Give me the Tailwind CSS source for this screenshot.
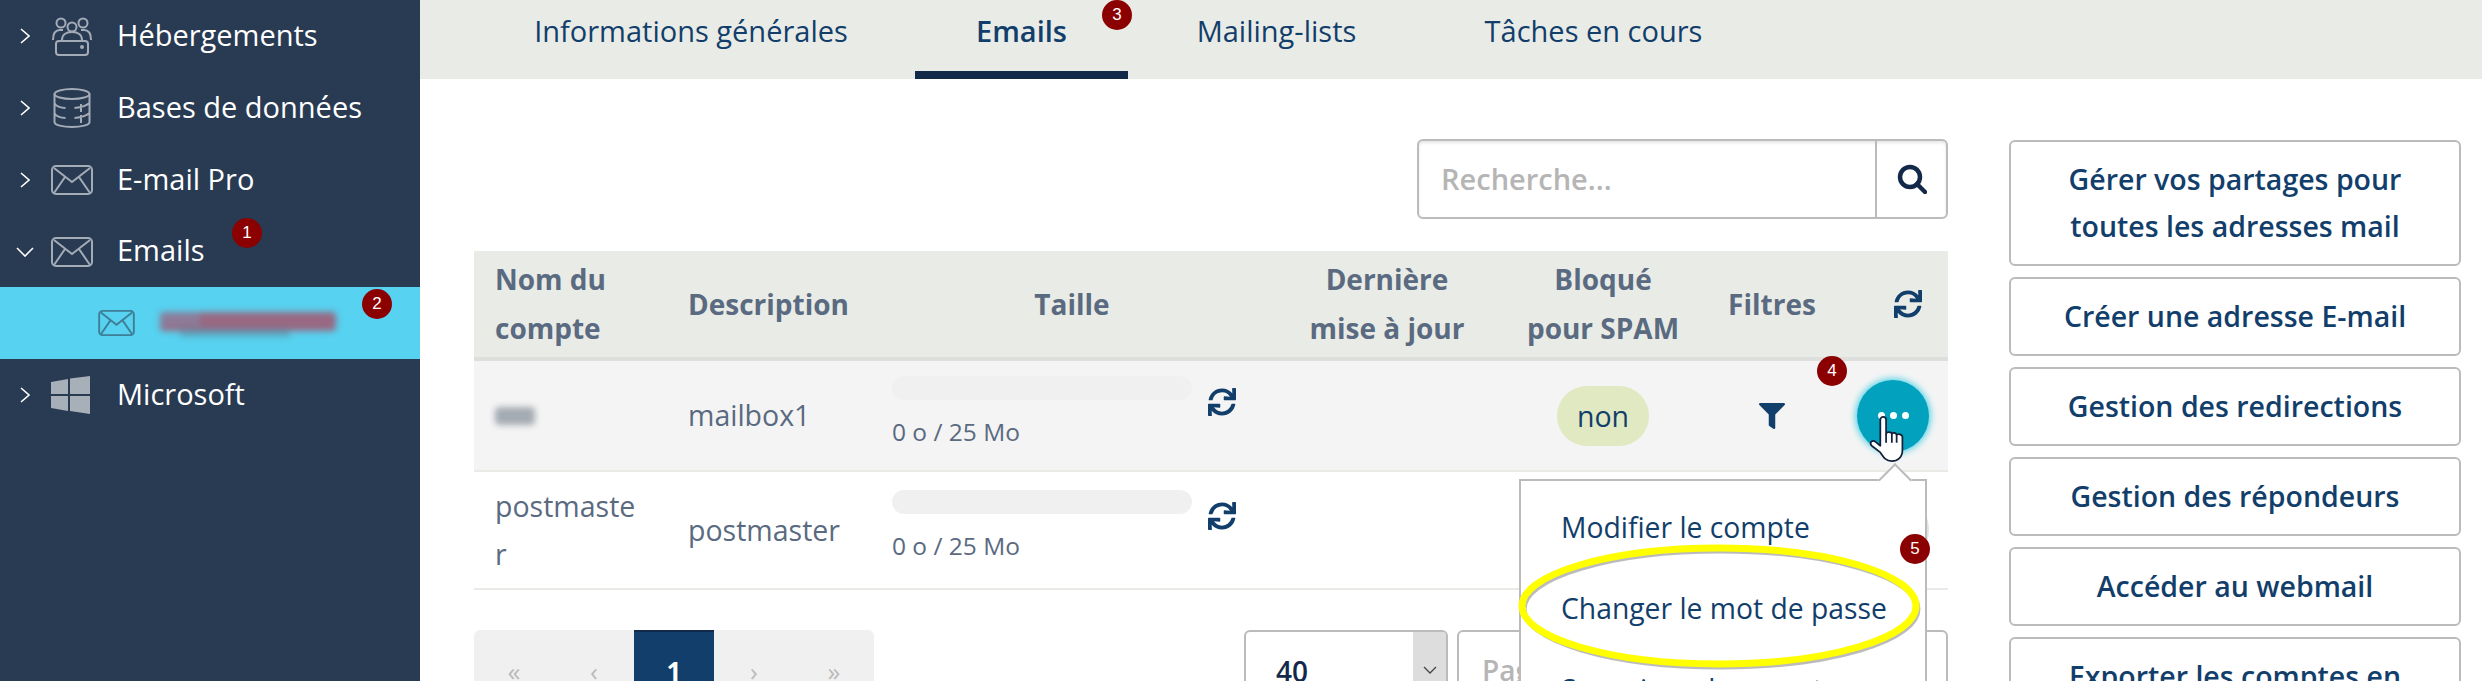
<!DOCTYPE html>
<html lang="fr">
<head>
    <meta charset="UTF-8">
    <title>Emails</title>
    <script src="https://cdn.jsdelivr.net/npm/@tailwindcss/browser@4"></script>
</head>
<body class="bg-white [font-family:'Open_Sans',sans-serif]">
<div class="relative flex h-[681px] w-[2482px] overflow-hidden">

    <!-- sidebar -->
    <aside class="w-[420px] shrink-0 bg-[#293a53] text-[29px] text-white">
        <div class="flex h-[72px] items-center">
            <svg class="ml-[20px] h-[16px] w-[10px]" viewBox="0 0 10 16" fill="none" stroke="#fff" stroke-width="1.6"><path d="M1 1l8 7-8 7"/></svg>
            <svg class="ml-[21px] h-[40px] w-[42px] text-[#a3abb7]" viewBox="0 0 42 40" fill="none" stroke="currentColor" stroke-width="2">
                <circle cx="10" cy="7" r="4.5"/><circle cx="21" cy="11" r="4.5"/><circle cx="32" cy="7" r="4.5"/>
                <path d="M2 24c0-7 3-10 7-10h3M40 24c0-7-3-10-7-10h-3M11 24c0-5 4-8 10-8s10 3 10 8"/>
                <rect x="5" y="25" width="32" height="14" rx="3"/><circle cx="31" cy="31" r="1" fill="currentColor"/>
            </svg>
            <span class="mb-[3px] ml-[24px]">Hébergements</span>
        </div>
        <div class="flex h-[72px] items-center">
            <svg class="ml-[20px] h-[16px] w-[10px]" viewBox="0 0 10 16" fill="none" stroke="#fff" stroke-width="1.6"><path d="M1 1l8 7-8 7"/></svg>
            <svg class="ml-[21px] h-[40px] w-[42px] text-[#a3abb7]" viewBox="0 0 42 40" fill="none" stroke="currentColor" stroke-width="2">
                <ellipse cx="21" cy="6" rx="17.5" ry="5"/>
                <path d="M3.5 6v28c0 3 8 5 17.5 5s17.500-2 17.500-5V6M3.5 15c1 3 6 5 11 5M3.5 25c1 3 6 5 11 5M38.500 15c-2 2-6 4-15 5M38.500 25c-2 2-6 4-15 5M30 16v8M30 27v8"/>
            </svg>
            <span class="mb-[3px] ml-[24px]">Bases de données</span>
        </div>
        <div class="flex h-[72px] items-center">
            <svg class="ml-[20px] h-[16px] w-[10px]" viewBox="0 0 10 16" fill="none" stroke="#fff" stroke-width="1.6"><path d="M1 1l8 7-8 7"/></svg>
            <svg class="ml-[21px] h-[30px] w-[42px] text-[#a3abb7]" viewBox="0 0 42 30" fill="none" stroke="currentColor" stroke-width="2">
                <rect x="1" y="1" width="40" height="28" rx="4"/><path d="M3 3l18 14L39 3M3 28l11-16M39 28L28 12"/>
            </svg>
            <span class="mb-[3px] ml-[24px]">E-mail Pro</span>
        </div>
        <div class="flex h-[71px] items-center">
            <svg class="ml-[16px] h-[10px] w-[18px]" viewBox="0 0 18 10" fill="none" stroke="#fff" stroke-width="1.6"><path d="M1 1l8 8 8-8"/></svg>
            <svg class="ml-[17px] h-[30px] w-[42px] text-[#a3abb7]" viewBox="0 0 42 30" fill="none" stroke="currentColor" stroke-width="2">
                <rect x="1" y="1" width="40" height="28" rx="4"/><path d="M3 3l18 14L39 3M3 28l11-16M39 28L28 12"/>
            </svg>
            <span class="mb-[3px] ml-[24px]">Emails</span>
        </div>
        <div class="flex h-[72px] items-center bg-[#57d2f0]">
            <svg class="ml-[98px] h-[26px] w-[37px] text-[#3e7f97]" viewBox="0 0 42 30" fill="none" stroke="currentColor" stroke-width="2.2">
                <rect x="1" y="1" width="40" height="28" rx="4"/><path d="M3 3l18 14L39 3M3 28l11-16M39 28L28 12"/>
            </svg>
            <div class="relative ml-[25px] mt-[2px] h-[25px] w-[176px] blur-[3px]">
                <div class="h-[19px] w-full rounded-sm bg-[#a5566e]/85"></div>
                <div class="absolute left-[0px] top-[0px] h-[14px] w-[40px] bg-[#7f8fb0]/50"></div>
                <div class="absolute bottom-[0px] left-[20px] h-[9px] w-[110px] bg-[#5f7f95]/50"></div>
            </div>
        </div>
        <div class="flex h-[72px] items-center">
            <svg class="ml-[20px] h-[16px] w-[10px]" viewBox="0 0 10 16" fill="none" stroke="#fff" stroke-width="1.6"><path d="M1 1l8 7-8 7"/></svg>
            <svg class="ml-[21px] h-[38px] w-[40px] text-[#a7afb9]" viewBox="0 0 40 38" fill="currentColor">
                <path d="M0 6l17-3v15H0zM19 2.500L39 0v18H19zM0 20h17v15L0 32zM19 20h20v18l-20-3z"/>
            </svg>
            <span class="mb-[3px] ml-[26px]">Microsoft</span>
        </div>
    </aside>

    <main class="flex-1">
        <!-- tabs -->
        <nav class="flex h-[79px] gap-[7px] bg-[#e9ebe6] pl-[54px] text-[29px] text-[#123e6b]">
            <a class="h-full w-[434px] pt-[7px] text-center leading-[48px]">Informations générales</a>
            <a class="h-full w-[213px] border-b-8 border-[#12294a] pt-[7px] text-center font-semibold leading-[48px]">Emails</a>
            <a class="h-full w-[283px] pt-[7px] text-center leading-[48px]">Mailing-lists</a>
            <a class="h-full w-[337px] pt-[7px] text-center leading-[48px]">Tâches en cours</a>
        </nav>

        <div class="flex pl-[54px]">
            <section class="w-[1474px] shrink-0">
                <!-- search -->
                <div class="mt-[60px] flex justify-end">
                    <div class="flex h-[80px] w-[531px] rounded-md border-2 border-[#bbb] shadow-[inset_0_2px_3px_rgba(0,0,0,0.1)]">
                        <span class="flex flex-1 items-center pl-[22px] text-[29px] font-semibold text-[#b5b5b5]">Recherche...</span>
                        <span class="flex w-[71px] items-center justify-center border-l-2 border-[#bbb]">
                            <svg class="h-[30px] w-[30px]" viewBox="0 0 30 30" fill="none" stroke="#12294a" stroke-width="4.500"><circle cx="13" cy="13" r="10"/><path d="M20 20l8 8" stroke-linecap="round"/></svg>
                        </span>
                    </div>
                </div>

                <!-- accounts -->
                <table class="mt-[32px] w-full table-fixed border-collapse text-[28.5px] text-[#5a6a80]">
                    <colgroup>
                        <col class="w-[194px]"><col class="w-[203px]"><col class="w-[402px]"><col class="w-[228px]"><col class="w-[204px]"><col class="w-[134px]"><col class="w-[109px]">
                    </colgroup>
                    <thead class="bg-[#e9ebe6] text-[28px] leading-[49px]">
                        <tr class="h-[108px] border-b-4 border-[#dedfdc]">
                            <th class="pl-[21px] text-left font-bold">Nom du<br>compte</th>
                            <th class="pl-[20px] text-left font-bold">Description</th>
                            <th class="font-bold">Taille</th>
                            <th class="font-bold">Dernière<br>mise à jour</th>
                            <th class="font-bold">Bloqué<br>pour SPAM</th>
                            <th class="font-bold">Filtres</th>
                            <th class="pl-[28px]">
                                <svg class="mx-auto h-[28px] w-[28px] text-[#123e6b]" viewBox="0 0 512 512" fill="currentColor"><path d="M440.65 12.57l4 82.77A247.160 247.160 0 0 0 255.830 8C134.730 8 33.910 94.920 12.290 209.820A12 12 0 0 0 24.090 224h49.050a12 12 0 0 0 11.670-9.260 175.910 175.910 0 0 1 317-56.940l-101.460-4.860a12 12 0 0 0-12.570 12v47.410a12 12 0 0 0 12 12H500a12 12 0 0 0 12-12V12a12 12 0 0 0-12-12h-47.370a12 12 0 0 0-11.980 12.570zM255.830 432a175.610 175.610 0 0 1-146-77.800l101.800 4.870a12 12 0 0 0 12.570-12v-47.400a12 12 0 0 0-12-12H12a12 12 0 0 0-12 12V500a12 12 0 0 0 12 12h47.350a12 12 0 0 0 12-12.600l-4.150-82.570A247.170 247.170 0 0 0 255.830 504c121.110 0 221.930-86.920 243.550-201.820a12 12 0 0 0-11.800-14.180h-49.050a12 12 0 0 0-11.670 9.260A175.860 175.860 0 0 1 255.830 432z"/></svg>
                            </th>
                        </tr>
                    </thead>
                    <tbody>
                        <tr class="h-[112px] border-b-2 border-[#e9ebe6] bg-[#f4f4f4]">
                            <td class="pl-[21px]"><div class="h-[18px] w-[40px] rounded-sm bg-[#a5abb3] blur-[3px]"></div></td>
                            <td class="pl-[20px]">mailbox1</td>
                            <td class="pl-[21px]">
                                <div class="flex items-start gap-[16px]">
                                    <div class="h-[24px] w-[300px] rounded-full bg-[#f0f0f0]"></div>
                                    <svg class="mb-[-16px] mt-[12px] h-[28px] w-[28px] text-[#123e6b]" viewBox="0 0 512 512" fill="currentColor"><path d="M440.65 12.57l4 82.77A247.160 247.160 0 0 0 255.830 8C134.730 8 33.910 94.920 12.290 209.820A12 12 0 0 0 24.090 224h49.050a12 12 0 0 0 11.670-9.260 175.910 175.910 0 0 1 317-56.940l-101.460-4.860a12 12 0 0 0-12.570 12v47.410a12 12 0 0 0 12 12H500a12 12 0 0 0 12-12V12a12 12 0 0 0-12-12h-47.370a12 12 0 0 0-11.980 12.570zM255.830 432a175.610 175.610 0 0 1-146-77.800l101.800 4.870a12 12 0 0 0 12.570-12v-47.400a12 12 0 0 0-12-12H12a12 12 0 0 0-12 12V500a12 12 0 0 0 12 12h47.350a12 12 0 0 0 12-12.600l-4.150-82.570A247.170 247.170 0 0 0 255.830 504c121.110 0 221.930-86.920 243.550-201.820a12 12 0 0 0-11.800-14.180h-49.050a12 12 0 0 0-11.670 9.260A175.860 175.860 0 0 1 255.830 432z"/></svg>
                                </div>
                                <div class="mt-[8px] text-[24.5px] leading-[48px]">0 o / 25 Mo</div>
                            </td>
                            <td></td>
                            <td class="text-center"><span class="inline-block h-[60px] w-[92px] rounded-[30px] bg-[#e0e9c1] leading-[60px] text-[#123e6b]">non</span></td>
                            <td><svg class="mx-auto h-[26px] w-[26px] text-[#123e6b]" viewBox="0 0 512 512" fill="currentColor"><path d="M487.976 0H24.028C2.710 0-8.047 25.866 7.058 40.971L192 225.941V432c0 7.831 3.821 15.170 10.237 19.662l80 55.980C298.020 518.690 320 507.493 320 487.980V225.941l184.947-184.970C520.021 25.896 509.338 0 487.976 0z"/></svg></td>
                            <td>
                                <div class="ml-[18px] flex h-[72px] w-[72px] items-center justify-center gap-[5px] rounded-full bg-[#02a2bf] shadow-[0_0_6px_2px_#5fd4e6]">
                                    <i class="h-[7px] w-[7px] rounded-full bg-white"></i><i class="h-[7px] w-[7px] rounded-full bg-white"></i><i class="h-[7px] w-[7px] rounded-full bg-white"></i>
                                </div>
                            </td>
                        </tr>
                        <tr class="h-[118px] border-b-2 border-[#e9ebe6]">
                            <td class="pl-[21px] leading-[48px]">postmaste<br>r</td>
                            <td class="pl-[20px]">postmaster</td>
                            <td class="pl-[21px]">
                                <div class="flex items-start gap-[16px]">
                                    <div class="h-[24px] w-[300px] rounded-full bg-[#f0f0f0]"></div>
                                    <svg class="mb-[-16px] mt-[12px] h-[28px] w-[28px] text-[#123e6b]" viewBox="0 0 512 512" fill="currentColor"><path d="M440.65 12.57l4 82.77A247.160 247.160 0 0 0 255.830 8C134.730 8 33.910 94.920 12.290 209.820A12 12 0 0 0 24.090 224h49.050a12 12 0 0 0 11.670-9.260 175.910 175.910 0 0 1 317-56.940l-101.460-4.860a12 12 0 0 0-12.570 12v47.410a12 12 0 0 0 12 12H500a12 12 0 0 0 12-12V12a12 12 0 0 0-12-12h-47.370a12 12 0 0 0-11.980 12.570zM255.830 432a175.610 175.610 0 0 1-146-77.800l101.800 4.870a12 12 0 0 0 12.570-12v-47.400a12 12 0 0 0-12-12H12a12 12 0 0 0-12 12V500a12 12 0 0 0 12 12h47.350a12 12 0 0 0 12-12.600l-4.150-82.570A247.170 247.170 0 0 0 255.830 504c121.110 0 221.930-86.920 243.550-201.820a12 12 0 0 0-11.800-14.180h-49.050a12 12 0 0 0-11.670 9.260A175.860 175.860 0 0 1 255.830 432z"/></svg>
                                </div>
                                <div class="mt-[8px] text-[24.5px] leading-[48px]">0 o / 25 Mo</div>
                            </td>
                            <td></td>
                            <td></td>
                            <td></td>
                            <td><div class="ml-[18px] h-[72px] w-[72px] rounded-full border-2 border-[#e2e2e2]"></div></td>
                        </tr>
                    </tbody>
                </table>

                <!-- pagination -->
                <div class="mt-[40px] flex justify-between">
                    <div class="flex h-[79px] w-[400px] overflow-hidden rounded-t-md bg-[#f0f0f0] text-[26px] text-[#bbb]">
                        <span class="flex w-[80px] items-center justify-center pt-[4px]">«</span>
                        <span class="flex w-[80px] items-center justify-center pt-[4px]">‹</span>
                        <span class="flex w-[80px] items-center justify-center border-t-2 border-[#12294a] bg-[#123e6b] pt-[2px] font-bold text-white">1</span>
                        <span class="flex w-[80px] items-center justify-center pt-[4px]">›</span>
                        <span class="flex w-[80px] items-center justify-center pt-[4px]">»</span>
                    </div>
                    <div class="flex gap-[9px]">
                        <div class="flex h-[79px] w-[204px] overflow-hidden rounded-t-md border-2 border-[#bbb]">
                            <span class="flex flex-1 items-center pl-[30px] pt-[2px] text-[28px] font-semibold text-[#12294a]">40</span>
                            <span class="flex w-[33px] items-center justify-center bg-[#ddd]">
                                <svg class="h-[8px] w-[14px]" viewBox="0 0 14 8" fill="none" stroke="#444" stroke-width="1.300"><path d="M1 1l6 6 6-6"/></svg>
                            </span>
                        </div>
                        <div class="flex h-[79px] w-[491px] items-center rounded-t-md border-2 border-[#bbb] pl-[23px] text-[28px] font-semibold text-[#b5b5b5]">Page</div>
                    </div>
                </div>
            </section>

            <!-- actions -->
            <section class="ml-[61px] mt-[61px] flex w-[452px] shrink-0 flex-col gap-[11px] text-center text-[28.5px] font-semibold leading-[47px] text-[#123e6b]">
                <a class="flex h-[126px] shrink-0 items-center justify-center rounded-md border-2 border-[#bbb]">Gérer vos partages pour<br>toutes les adresses mail</a>
                <a class="flex h-[79px] shrink-0 items-center justify-center rounded-md border-2 border-[#bbb]">Créer une adresse E-mail</a>
                <a class="flex h-[79px] shrink-0 items-center justify-center rounded-md border-2 border-[#bbb]">Gestion des redirections</a>
                <a class="flex h-[79px] shrink-0 items-center justify-center rounded-md border-2 border-[#bbb]">Gestion des répondeurs</a>
                <a class="flex h-[79px] shrink-0 items-center justify-center rounded-md border-2 border-[#bbb]">Accéder au webmail</a>
                <a class="flex h-[126px] shrink-0 items-center justify-center rounded-md border-2 border-[#bbb]">Exporter les comptes en<br>CSV</a>
            </section>
        </div>
    </main>

    <!-- dropdown menu -->
    <div class="absolute left-[1519px] top-[479px] h-[260px] w-[408px] border-2 border-[#bbb] bg-white pl-[40px] text-[28.3px] leading-[81px] text-[#123e6b]">
        <div class="absolute left-[362px] top-[-13px] h-[24px] w-[24px] rotate-45 border-l-2 border-t-2 border-[#bbb] bg-white"></div>
        <div class="pt-[6px]">Modifier le compte</div>
        <div>Changer le mot de passe</div>
        <div>Supprimer le compte</div>
    </div>

    <!-- highlight around the second entry -->
    <svg class="absolute left-[1516px] top-[540px] h-[132px] w-[406px]" viewBox="0 0 406 132" fill="none">
        <ellipse cx="203" cy="66" rx="197" ry="58" stroke="#555" stroke-opacity="0.4" stroke-width="5" transform="translate(2 3)"/>
        <ellipse cx="203" cy="66" rx="197" ry="58" stroke="#ffff00" stroke-width="7"/>
    </svg>

    <!-- hand cursor -->
    <svg class="absolute left-[1868px] top-[415px] h-[48px] w-[40px]" viewBox="0 0 40 50">
        <path d="M12 5c0-4 6-4 6 0v15c0-3 6-3 6 0 0-2 5-2 5 1 1-2 6-1 6 2v14c0 7-5 11-11 11s-8-3-12-9L3 32c-3-3 1-7 4-4l5 4z" fill="#fff" stroke="#12203a" stroke-width="1.800" stroke-linejoin="round"/>
        <path d="M18 20v9M24 20v9M29 21v8" stroke="#12203a" stroke-width="1.800"/>
    </svg>

    <!-- numbered steps -->
    <span class="absolute left-[232px] top-[218px] flex h-[30px] w-[30px] items-center justify-center rounded-full bg-[#8b0000] [font-family:'Liberation_Sans',sans-serif] text-[17px] text-white">1</span>
    <span class="absolute left-[362px] top-[289px] flex h-[30px] w-[30px] items-center justify-center rounded-full bg-[#8b0000] [font-family:'Liberation_Sans',sans-serif] text-[17px] text-white">2</span>
    <span class="absolute left-[1102px] top-[0px] flex h-[30px] w-[30px] items-center justify-center rounded-full bg-[#8b0000] [font-family:'Liberation_Sans',sans-serif] text-[17px] text-white">3</span>
    <span class="absolute left-[1817px] top-[356px] flex h-[30px] w-[30px] items-center justify-center rounded-full bg-[#8b0000] [font-family:'Liberation_Sans',sans-serif] text-[17px] text-white">4</span>
    <span class="absolute left-[1900px] top-[534px] flex h-[30px] w-[30px] items-center justify-center rounded-full bg-[#8b0000] [font-family:'Liberation_Sans',sans-serif] text-[17px] text-white">5</span>
</div>
</body>
</html>
